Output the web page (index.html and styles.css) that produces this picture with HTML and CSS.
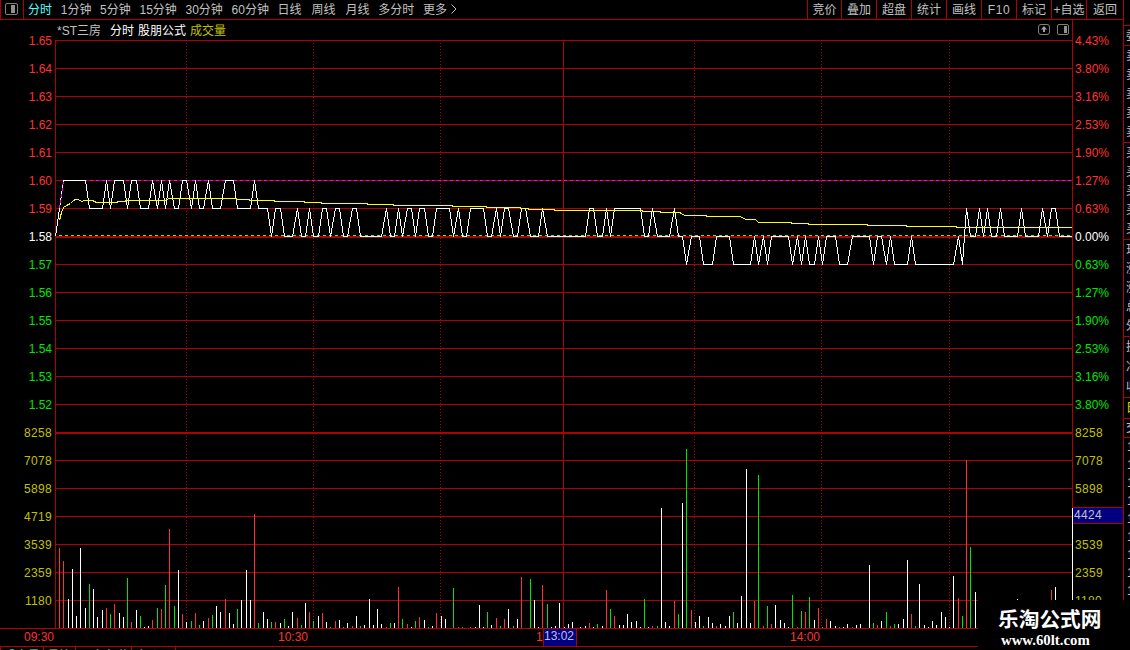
FILE: index.html
```html
<!DOCTYPE html>
<html lang="zh-CN">
<head>
    <meta charset="UTF-8">
    <meta name="viewport" content="width=device-width, initial-scale=1.0">
    <title>*ST三房 分时</title>
    <link rel="stylesheet" href="styles.css">
</head>
<body>
    <div class="screen">
        <div class="main">
            <div class="topbar">
                <div class="layout-btn">
                    <svg width="13" height="12" viewBox="0 0 13 12"><rect x="0.5" y="0.5" width="12" height="11" rx="1.5" fill="none" stroke="#808080"/><rect x="6" y="2" width="4" height="8" fill="#909090"/></svg>
                </div>
                <div class="periods">
                    <span class="active">分时</span>
                    <span>1分钟</span>
                    <span>5分钟</span>
                    <span>15分钟</span>
                    <span>30分钟</span>
                    <span>60分钟</span>
                    <span class="wide">日线</span>
                    <span class="wide">周线</span>
                    <span>月线</span>
                    <span>多分时</span>
                    <span class="more">更多<svg width="6" height="10" viewBox="0 0 6 10"><path d="M0.5 0.5L5 5L0.5 9.5" fill="none" stroke="#c0c0c0"/></svg></span>
                </div>
                <div class="tools">
                    <span class="first">竞价</span>
                    <span>叠加</span>
                    <span>超盘</span>
                    <span>统计</span>
                    <span>画线</span>
                    <span class="f10">F10</span>
                    <span>标记</span>
                    <span class="fav">+自选</span>
                    <span class="back">返回</span>
                </div>
            </div>

            <div class="chart-row">
                <div class="axis axis-left">
                    <span class="up">1.65</span>
                    <span class="up">1.64</span>
                    <span class="up">1.63</span>
                    <span class="up">1.62</span>
                    <span class="up">1.61</span>
                    <span class="up">1.60</span>
                    <span class="up">1.59</span>
                    <span class="flat">1.58</span>
                    <span class="down">1.57</span>
                    <span class="down">1.56</span>
                    <span class="down">1.55</span>
                    <span class="down">1.54</span>
                    <span class="down">1.53</span>
                    <span class="down">1.52</span>
                    <span class="vol">8258</span>
                    <span class="vol">7078</span>
                    <span class="vol">5898</span>
                    <span class="vol">4719</span>
                    <span class="vol">3539</span>
                    <span class="vol">2359</span>
                    <span class="vol">1180</span>
                </div>

                <div class="plot">
                    <div class="titlebar">
                        <span class="stock">*ST三房</span>
                        <span>分时</span>
                        <span>股朋公式</span>
                        <span class="vol">成交量</span>
                        <div class="title-icons">
                            <svg width="12" height="11" viewBox="0 0 12 11"><rect x="0.5" y="0.5" width="11" height="10" rx="2.5" fill="none" stroke="#808080"/><path d="M6 2L9 5.5H7V8H5V5.5H3Z" fill="#a0a0a0"/></svg>
                            <svg width="12" height="11" viewBox="0 0 12 11"><rect x="0.5" y="0.5" width="11" height="10" rx="1.5" fill="none" stroke="#808080"/><rect x="7" y="2" width="3" height="7" fill="#909090"/></svg>
                        </div>
                    </div>
                    <svg class="chart" width="1018" height="588" viewBox="55 40 1018 588">
                        <g transform="translate(0.5 0.5)">
                            <!-- grid -->
                            <path class="grid" d="M55 40H1073M55 68H1073M55 96H1073M55 124H1073M55 152H1073M55 180H1073M55 208H1073M55 236H1073M55 237H1073M55 264H1073M55 292H1073M55 320H1073M55 348H1073M55 376H1073M55 404H1073M55 432H1073M55 433H1073M55 460H1073M55 488H1073M55 516H1073M55 544H1073M55 572H1073M55 600H1073"/>
                            <path class="grid" d="M55 39.5V628M563 39.5V628M1072 39.5V628"/>
                            <path class="grid dots" d="M186 42.5V628M313 42.5V628M440 42.5V628M694 42.5V628M821 42.5V628M949 42.5V628"/>

                            <!-- volume -->
                            <path class="bar-white" d="M68 628V599M72 628V569M76 628V616M80 628V548M85 628V608M93 628V589M97 628V617M102 628V610M119 628V613M123 628V617M136 628V610M144 628V627M148 628V626M178 628V570M186 628V622M203 628V621M216 628V606M220 628V612M229 628V613M233 628V624M241 628V600M246 628V570M250 628V600M263 628V612M267 628V619M280 628V623M288 628V626M292 628V612
                                M305 628V603M318 628V616M326 628V622M339 628V620M347 628V623M356 628V616M364 628V625M369 628V599M373 628V625M377 628V609M381 628V624M394 628V623M411 628V627M424 628V620M432 628V626M441 628V616M445 628V619M475 628V627M479 628V605M483 628V627M491 628V625M508 628V609M517 628V619M534 628V600M538 628V627M551 628V627M555 628V626M559 628V603M564 628V627M568 628V624M572 628V622M580 628V627M585 628V626
                                M593 628V627M602 628V626M619 628V625M623 628V625M627 628V614M631 628V622M636 628V621M640 628V627M648 628V627M661 628V508M665 628V622M669 628V626M682 628V503M695 628V622M699 628V616M708 628V617M712 628V623M720 628V624M725 628V626M729 628V616M737 628V623M741 628V596M746 628V469M750 628V623M775 628V605M780 628V620M784 628V623M788 628V627M814 628V620M830 628V621M835 628V626M843 628V627M847 628V624M856 628V625M860 628V624
                                M869 628V565M881 628V621M898 628V624M903 628V619M907 628V560M919 628V584M924 628V625M928 628V627M932 628V621M936 628V625M941 628V612M945 628V617M949 628V627M953 628V576M975 628V592M1017 628V599M1055 628V587M1072 628V508"/>
                            <path class="bar-red" d="M59 628V548M63 628V561M106 628V608M114 628V604M131 628V622M152 628V620M161 628V609M169 628V529M182 628V614M195 628V613M208 628V618M225 628V599M254 628V514M275 628V622M297 628V618M309 628V612M322 628V613M335 628V621M352 628V626M386 628V627M398 628V587M407 628V624M419 628V617M436 628V613M458 628V627M470 628V627M496 628V618M504 628V619M521 628V577M542 628V585M589 628V623
                                M606 628V590M614 628V616M652 628V626M674 628V601M691 628V610M716 628V626M754 628V601M763 628V626M771 628V624M797 628V627M805 628V612M818 628V608M826 628V619M852 628V627M877 628V625M890 628V626M911 628V614M958 628V598M966 628V460M1051 628V590"/>
                            <path class="bar-green" d="M89 628V584M110 628V614M127 628V578M140 628V616M157 628V608M165 628V585M174 628V606M191 628V621M199 628V625M212 628V615M237 628V609M258 628V623M271 628V622M284 628V619M301 628V625M313 628V621M330 628V627M343 628V627M360 628V626M390 628V623M402 628V619M415 628V621M428 628V627M453 628V588M462 628V627M487 628V612M500 628V626M513 628V626M530 628V579M547 628V604
                                M597 628V624M610 628V609M644 628V599M657 628V626M678 628V614M686 628V449M703 628V626M733 628V612M758 628V475M767 628V606M792 628V595M801 628V611M809 628V597M822 628V627M839 628V627M873 628V623M886 628V612M894 628V624M915 628V626M962 628V616M970 628V547"/>

                            <!-- high / low -->
                            <path class="high" d="M65.5 180H1072"/>
                            <path class="low" d="M58.5 235H1072"/>

                            <!-- price -->
                            <path class="price" d="M55 236L63 180H85L89 208H102L106 180L110 208L114 180H123L127 208L131 180H136L140 208H148L152 180L157 208L161 180L165 208L169 180L174 208H178L182 180H186L191 208L195 180L199 208H203L208 180L212 208H220L225 180H233L237 208H250L254 180L258 208H267L271 236L275 208H280L284 236H292
                                L297 208L301 236H305L309 208L313 236H318L322 208H326L330 236L335 208H339L343 236H347L352 208H356L360 236H381L386 208L390 236H394L398 208L402 236L407 208H411L415 236L419 208H424L428 236H432L436 208H449L453 236L458 208L462 236H466L470 208H483L487 236H491L496 208L500 236L504 208H508L513 236H517L521 208H525L530 236H538L542 208L547 236H585
                                L589 208H593L597 236H602L606 208L610 236L614 208H640L644 236H648L652 208L657 236H669L674 208L678 236H682L686 264L691 236H699L703 264H712L716 236H729L733 264H750L754 236L758 264L763 236L767 264L771 236H788L792 264L797 236L801 264L805 236L809 264H814L818 236L822 264L826 236H835L839 264H847L852 236H869
                                L873 264L877 236H881L886 264L890 236L894 264H907L911 236L915 264H953L958 236L962 264L966 208L970 236H975L979 208L983 236L987 208L991 236H996L1000 208L1004 236H1017L1021 208L1025 236H1038L1042 208L1047 236L1051 208H1055L1059 236H1071.5"/>
                            <path class="high" d="M59 208L63 180"/>

                            <!-- average -->
                            <path class="average" d="M59 220L61 212L63 207L66 205L70 203L73 200L75 199H78L81 201L84 200H92L96 202H116L118 201H125V200H165L168 198H236V199H249V200H274V201H304V202H321V203H367V204H393V205H452V206H486V207H520V208H528V209H554V210H642V211H660V212H680V213L685 215H706V216H740L745 219H755L758 222H791V223H808V224H867V225H906V226H956V227H1071.5"/>
                        </g>
                    </svg>
                </div>

                <div class="axis axis-right">
                    <span class="up">4.43%</span>
                    <span class="up">3.80%</span>
                    <span class="up">3.16%</span>
                    <span class="up">2.53%</span>
                    <span class="up">1.90%</span>
                    <span class="up">1.27%</span>
                    <span class="up">0.63%</span>
                    <span class="flat">0.00%</span>
                    <span class="down">0.63%</span>
                    <span class="down">1.27%</span>
                    <span class="down">1.90%</span>
                    <span class="down">2.53%</span>
                    <span class="down">3.16%</span>
                    <span class="down">3.80%</span>
                    <span class="vol">8258</span>
                    <span class="vol">7078</span>
                    <span class="vol">5898</span>
                    <span class="cursor">4424</span>
                    <span class="vol">3539</span>
                    <span class="vol">2359</span>
                    <span class="vol">1180</span>
                </div>
            </div>

            <div class="time-axis">
                <span>09:30</span>
                <span class="long">10:30</span>
                <span>13:00</span>
                <span>14:00</span>
                <div class="time-cursor">13:02</div>
            </div>

            <div class="tabs">
                <span class="active tab3">成交量</span>
                <span class="tab2">量比</span>
                <span class="tab4">买卖力道</span>
                <span class="tab3">竞价图</span>
            </div>
        </div>

        <div class="quote">
            <div class="block top"></div>
            <div class="block"><span>委比</span></div>
            <div class="block five"><span>卖五</span><span>卖四</span><span>卖三</span><span>卖二</span><span>卖一</span></div>
            <div class="block five"><span>买一</span><span>买二</span><span>买三</span><span>买四</span><span>买五</span></div>
            <div class="block five"><span>现价</span><span>涨跌</span><span>涨幅</span><span>总量</span><span>外盘</span></div>
            <div class="block three"><span>换手</span><span>净资</span><span>收益</span></div>
            <div class="block yellow"><span>日</span></div>
            <div class="block deal"><span>交易</span></div>
            <div class="ticks">
                <span>14:56</span><span>14:56</span><span>14:56</span><span>14:56</span><span>14:56</span><span>14:57</span><span>14:57</span><span>14:57</span><span>15:00</span>
            </div>
        </div>

        <div class="watermark">
            <div class="site-name">乐淘公式网</div>
            <div class="site-url">www.60lt.com</div>
        </div>
    </div>
</body>
</html>
```

FILE: styles.css
```css
* {
    box-sizing: border-box;
}

body {
    margin: 0;
    background-color: #000;
    color: #c0c0c0;
    font-family: 'Liberation Sans', 'Noto Sans CJK SC', sans-serif;
    font-size: 12px;
}

.screen {
    position: relative;
    display: flex;
    width: 1130px;
    height: 650px;
    overflow: hidden;
}

.main {
    display: flex;
    flex-direction: column;
    width: 1123px;
}

/* top bar */
.topbar {
    display: flex;
    height: 20px;
    flex-shrink: 0;
    line-height: 20px;
    border-bottom: 1px solid #b00000;
    white-space: nowrap;
}

.layout-btn {
    width: 24px;
    padding: 3px 0 0 4px;
    line-height: 0;
    border-left: 1px solid #b00000;
    border-right: 1px solid #b00000;
}

.periods {
    display: flex;
    flex: 1;
    gap: 8.7px;
    padding-left: 4px;
}

.periods .active {
    color: #54fcfc;
}

.periods .wide {
    margin-right: 1.3px;
}

.periods .more {
    display: flex;
    align-items: center;
    gap: 4px;
}

.periods .more svg {
    margin-bottom: 1px;
}

.tools {
    display: flex;
}

.tools span {
    width: 35px;
    height: 19px;
    text-align: center;
    border-left: 1px solid #b00000;
}

.tools .first {
    width: 34px;
}

.tools .f10 {
    letter-spacing: 0.6px;
}

.tools .back {
    width: 37px;
}

/* chart */
.chart-row {
    display: flex;
    height: 608px;
    flex-shrink: 0;
}

.axis {
    display: flex;
    flex-direction: column;
    padding-top: 7px;
    line-height: 28px;
}

.axis span {
    height: 28px;
    flex-shrink: 0;
}

.axis-left {
    width: 55px;
    padding-right: 3px;
    text-align: right;
}

.axis-right {
    width: 50px;
    padding-left: 2px;
}

.up {
    color: #ff3232;
}

.down {
    color: #00e600;
}

.flat {
    color: #fff;
}

.vol {
    color: #c0c000;
}

.axis .vol {
    letter-spacing: 0.3px;
}

.axis .cursor {
    height: 17px;
    margin: 4px 0 7px -2px;
    padding-left: 1px;
    line-height: 15px;
    letter-spacing: 0.3px;
    color: #c0c0c0;
    background-color: #000080;
    border-top: 1px solid #b00000;
    border-bottom: 1px solid #b00000;
}

.plot {
    width: 1018px;
}

.titlebar {
    display: flex;
    gap: 4px;
    height: 20px;
    padding-left: 2px;
    line-height: 22px;
    color: #fff;
    border-right: 1px solid #b00000;
}

.titlebar .stock {
    margin-right: 5px;
    color: #c0c0c0;
}

.title-icons {
    display: flex;
    gap: 7px;
    margin-left: auto;
    padding: 4px 3px 0 0;
}

.chart {
    display: block;
}

.chart path {
    fill: none;
    stroke-width: 1;
    shape-rendering: crispEdges;
}

.chart .bar-white,
.chart .bar-red,
.chart .bar-green {
    transform: translateY(-0.5px);
}

.chart .grid {
    stroke: #b00000;
}

.chart .dots {
    stroke-dasharray: 1 2;
}

.chart .bar-white,
.chart .price {
    stroke: #fff;
}

.chart .bar-red {
    stroke: #ff3232;
}

.chart .bar-green {
    stroke: #00e600;
}

.chart .high {
    stroke: #ff00ff;
    stroke-dasharray: 3 3;
}

.chart .low {
    stroke: #32ff50;
    stroke-dasharray: 3 3;
}

.chart .average {
    stroke: #ffff00;
}

/* time axis */
.time-axis {
    position: relative;
    display: flex;
    height: 19px;
    flex-shrink: 0;
    padding-left: 24px;
    line-height: 16px;
    color: #ff3232;
    border-top: 1px solid #b00000;
    border-bottom: 1px solid #b00000;
}

.time-axis span {
    width: 254px;
}

.time-axis .long {
    width: 258px;
}

.time-cursor {
    position: absolute;
    left: 543px;
    top: 0;
    width: 34px;
    height: 17px;
    line-height: 14px;
    color: #c0c0e0;
    background-color: #000080;
    border-left: 1px solid #b00000;
    border-right: 1px solid #b00000;
}

.tabs {
    display: flex;
    height: 3px;
    overflow: hidden;
    line-height: 18px;
    border-left: 1px solid #b00000;
}

.tabs span {
    text-align: center;
    border-right: 1px solid #b00000;
}

.tabs .active {
    width: 43px;
    color: #54fcfc;
}

.tab2 {
    width: 32px;
}

.tab3 {
    width: 44px;
}

.tab4 {
    width: 56px;
}

/* quote panel */
.quote {
    width: 7px;
    overflow: hidden;
    white-space: nowrap;
    border-left: 1px solid #b00000;
}

.block {
    display: flex;
    flex-direction: column;
    justify-content: space-around;
    height: 20px;
    padding-left: 2px;
    line-height: 18px;
    border-bottom: 1px solid #b00000;
}

.block.top {
    height: 26px;
}

.block.five {
    height: 97px;
}

.block.three {
    height: 61px;
}

.block.yellow {
    height: 21px;
    color: #e0e000;
}

.block.deal {
    height: 19px;
}

.ticks span {
    display: block;
    height: 18px;
    padding-left: 3px;
    line-height: 19px;
}

/* site mark over the corner */
.watermark {
    position: absolute;
    right: 0;
    bottom: 0;
    width: 152px;
    height: 50px;
    padding: 7px 0 0 20px;
    color: #fff;
    font-weight: bold;
    background-color: #000;
}

.site-name {
    font-size: 20.7px;
    line-height: 25px;
}

.site-url {
    padding-left: 3px;
    font-family: 'Liberation Serif', serif;
    font-size: 14.8px;
    line-height: 16px;
}
```
